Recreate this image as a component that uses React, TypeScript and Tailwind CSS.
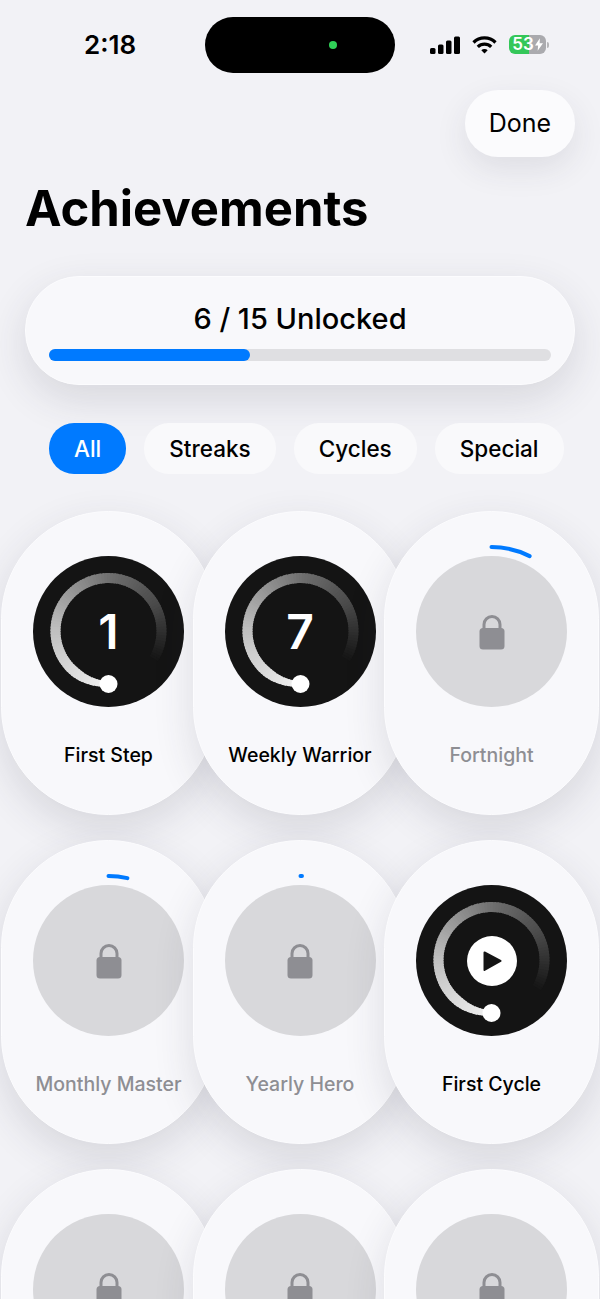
import React from 'react';

type Badge = {
  name?: string;
  unlocked?: boolean;
  num?: string;
  play?: boolean;
  arc?: number;
};

const badges: Badge[] = [
  { name: 'First Step', unlocked: true, num: '1' },
  { name: 'Weekly Warrior', unlocked: true, num: '7' },
  { name: 'Fortnight', arc: 27 },
  { name: 'Monthly Master', arc: 13 },
  { name: 'Yearly Hero', arc: 1 },
  { name: 'First Cycle', unlocked: true, play: true },
  {},
  {},
  {},
];

const filters = ['All', 'Streaks', 'Cycles', 'Special'];

const polar = (cx: number, cy: number, r: number, deg: number) => {
  const a = ((deg - 90) * Math.PI) / 180;
  return [cx + r * Math.cos(a), cy + r * Math.sin(a)];
};

const arcPath = (cx: number, cy: number, r: number, from: number, to: number) => {
  const [x1, y1] = polar(cx, cy, r, from);
  const [x2, y2] = polar(cx, cy, r, to);
  return `M${x1} ${y1}A${r} ${r} 0 0 1 ${x2} ${y2}`;
};

// gray level along the ring, read off the reference
const stops = [
  [0, 240],
  [0.3, 190],
  [0.6, 110],
  [0.8, 72],
  [1, 20],
];

const grayAt = (t: number) => {
  const idx = stops.findIndex((s) => s[0] >= t);
  if (idx <= 0) return stops[0][1];
  const [t0, g0] = stops[idx - 1];
  const [t1, g1] = stops[idx];
  return Math.round(g0 + ((t - t0) / (t1 - t0)) * (g1 - g0));
};

// fading ring, bright at the bottom and gone by the right side
const Ring = () => {
  const steps = Array.from({ length: 100 }, (_, i) => 99 - i);
  return (
    <svg viewBox="0 0 151 151" className="absolute inset-0 h-full w-full">
      {steps.map((i) => {
        const t = i / 100;
        const from = 180 + t * 300;
        const width = t < 0.12 ? 5.5 + (t / 0.12) * 4.5 : 10;
        const gray = grayAt(t);
        return (
          <path
            key={i}
            d={arcPath(75.5, 75, 53, from, from + 4.5)}
            fill="none"
            stroke={`rgb(${gray},${gray},${gray})`}
            strokeWidth={width}
          />
        );
      })}
      <circle cx="75.5" cy="128" r="9" fill="#fff" />
    </svg>
  );
};

const Lock = () => (
  <svg width="26" height="36" viewBox="0 0 26 36" fill="none">
    <path d="M5 16V10.5a8 8 0 0 1 16 0V16" stroke="#8e8e93" strokeWidth="3" />
    <rect x="0.5" y="14" width="25" height="21.5" rx="3.5" fill="#8e8e93" />
  </svg>
);

const BadgeCard = ({ badge }: { badge: Badge }) => (
  <div className="relative flex h-[304px] w-[215px] flex-col items-center rounded-full border border-[#fcfcfe] bg-[#f8f8fb] pt-[44px] shadow-[0_14px_40px_rgba(50,50,70,0.14)]">
    {badge.unlocked ? (
      <div className="relative flex h-[151px] w-[151px] items-center justify-center rounded-full bg-[#141414]">
        <Ring />
        {badge.num && (
          <span className="relative text-[48px] leading-none font-semibold text-white">{badge.num}</span>
        )}
        {badge.play && (
          <div className="relative flex h-[50px] w-[50px] items-center justify-center rounded-full bg-white">
            <svg width="20" height="22" viewBox="0 0 20 22">
              <path d="M2.5 2.5 18.5 11 2.5 20Z" fill="#141414" stroke="#141414" strokeWidth="2" strokeLinejoin="round" />
            </svg>
          </div>
        )}
      </div>
    ) : (
      <div className="relative flex h-[151px] w-[151px] items-center justify-center rounded-full bg-[#d8d8db]">
        <Lock />
        {!!badge.arc && (
          <svg viewBox="0 0 151 151" className="absolute inset-0 h-full w-full overflow-visible">
            <path
              d={arcPath(75.5, 75, 84, 0, badge.arc)}
              fill="none"
              stroke="#007aff"
              strokeWidth="4"
              strokeLinecap="round"
            />
          </svg>
        )}
      </div>
    )}
    {badge.name && (
      <span
        className={`mt-[36px] text-[19.5px] leading-6 font-medium whitespace-nowrap ${
          badge.unlocked ? 'text-black' : 'text-[#8e8e93]'
        }`}
      >
        {badge.name}
      </span>
    )}
  </div>
);

const StatusBar = () => (
  <div className="flex h-[73px] items-start pt-[17px] pl-[84px]">
    <span className="mt-[12px] w-[121px] text-[26px] leading-8 font-semibold text-black">2:18</span>
    <div className="flex h-[56px] w-[190px] items-center rounded-full bg-black pl-[124px]">
      <div className="h-[8px] w-[8px] rounded-full bg-[#30d158]" />
    </div>
    <div className="mt-[18px] ml-[35px] flex items-center">
      <svg width="30" height="18" viewBox="0 0 30 18" fill="#000">
        <rect x="0" y="12" width="5.5" height="6" rx="1.5" />
        <rect x="8" y="8.5" width="5.5" height="9.5" rx="1.5" />
        <rect x="16" y="4.5" width="5.5" height="13.5" rx="1.5" />
        <rect x="24" y="0.5" width="6" height="17.5" rx="1.5" />
      </svg>
      <svg className="ml-[12px]" width="25" height="18" viewBox="0 0 25 18" fill="none" stroke="#000" strokeWidth="3.2">
        <path d="M1.5 6.5a15.5 15.5 0 0 1 22 0" />
        <path d="M5.8 10.8a9.5 9.5 0 0 1 13.4 0" />
        <path d="M12.5 17.5 9.3 14.3a4.5 4.5 0 0 1 6.4 0Z" fill="#000" stroke="none" />
      </svg>
      <div className="ml-[12px] flex h-[19px] w-[37px] items-center justify-center gap-[1px] rounded-[6px] bg-[linear-gradient(90deg,#34c759_53%,#aaaaae_53%)] text-[17px] leading-none font-semibold text-white">
        <span>53</span>
        <svg width="8" height="13" viewBox="0 0 9 14" fill="#fff">
          <path d="M5.5 0 0 8h3.5L3 14l6-8.5H5.2Z" />
        </svg>
      </div>
      <div className="ml-[1px] h-[6px] w-[2px] rounded-r-sm bg-[#b5b5b8]" />
    </div>
  </div>
);

export default function App() {
  return (
    <div className="h-[1299px] w-[600px] overflow-hidden bg-[#f2f2f6] font-['Inter',sans-serif] text-black">
      <StatusBar />

      <div className="mt-[17px] flex justify-end pr-[25px]">
        <button className="h-[67px] w-[110px] rounded-[33px] bg-[#fbfbfd] pt-[1px] text-[25px] shadow-[0_12px_32px_rgba(50,50,70,0.1)]">
          Done
        </button>
      </div>

      <h1 className="mt-[24px] pl-[25px] text-[49px] leading-[56px] font-bold">Achievements</h1>

      <div className="mx-[25px] mt-[39px] flex h-[109px] flex-col rounded-[54px] border border-[#fcfcfe] bg-[#f8f8fb] px-[23px] pt-[24px] shadow-[0_14px_40px_rgba(50,50,70,0.14)]">
        <div className="text-center text-[29px] leading-9 font-medium">6 / 15 Unlocked</div>
        <div className="mt-[12px] h-[12px] rounded-full bg-[#dfdfe2]">
          <div className="h-full w-[40%] rounded-full bg-[#007aff]" />
        </div>
      </div>

      <div className="mt-[38px] flex gap-[18px] pl-[49px]">
        {filters.map((f, i) => (
          <div
            key={f}
            className={`flex h-[51px] items-center rounded-[25px] text-[22.5px] font-medium ${
              i === 0 ? 'bg-[#007aff] px-[25px] text-white' : 'bg-[#f9f9fb] px-[25px] text-black'
            }`}
          >
            {f}
          </div>
        ))}
      </div>

      <div className="mt-[37px] grid grid-cols-[repeat(3,191.5px)] gap-y-[25px] pl-[1px]">
        {badges.map((b, i) => (
          <BadgeCard key={i} badge={b} />
        ))}
      </div>
    </div>
  );
}
